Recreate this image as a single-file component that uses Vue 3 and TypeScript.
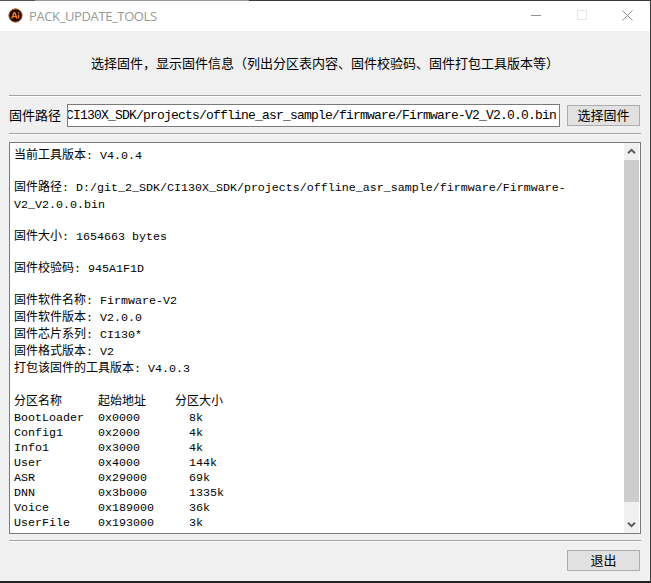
<script setup lang="ts">
interface Line {
  label?: string
  value?: string
}
interface Partition {
  name: string
  address: string
  size: string
}

const path = 'CI130X_SDK/projects/offline_asr_sample/firmware/Firmware-V2_V2.0.0.bin'

const lines: Line[] = [
  { label: '当前工具版本', value: ': V4.0.4' },
  {},
  { label: '固件路径', value: ': D:/git_2_SDK/CI130X_SDK/projects/offline_asr_sample/firmware/Firmware-' },
  { value: 'V2_V2.0.0.bin' },
  {},
  { label: '固件大小', value: ': 1654663 bytes' },
  {},
  { label: '固件校验码', value: ': 945A1F1D' },
  {},
  { label: '固件软件名称', value: ': Firmware-V2' },
  { label: '固件软件版本', value: ': V2.0.0' },
  { label: '固件芯片系列', value: ': CI130*' },
  { label: '固件格式版本', value: ': V2' },
  { label: '打包该固件的工具版本', value: ': V4.0.3' },
  {},
]

const partitions: Partition[] = [
  { name: 'BootLoader', address: '0x0000', size: '8k' },
  { name: 'Config1', address: '0x2000', size: '4k' },
  { name: 'Info1', address: '0x3000', size: '4k' },
  { name: 'User', address: '0x4000', size: '144k' },
  { name: 'ASR', address: '0x29000', size: '69k' },
  { name: 'DNN', address: '0x3b000', size: '1335k' },
  { name: 'Voice', address: '0x189000', size: '36k' },
  { name: 'UserFile', address: '0x193000', size: '3k' },
]
</script>

<template>
  <div class="window">
    <div class="top-edge"></div>
    <header class="titlebar">
      <svg class="logo" width="15" height="15" viewBox="0 0 15 15">
        <circle cx="7.5" cy="7.5" r="6.7" fill="#1c0d06" stroke="#d9662a" stroke-width="1" />
        <path d="M3.8 10.4 6 4.8h.8l2.2 5.6M4.7 8.6h3.5" fill="none" stroke="#f47b20" stroke-width="1.4" />
        <path d="M10.6 6.4v4M10.6 4.2v1.3" stroke="#f47b20" stroke-width="1.4" />
      </svg>
      <span class="title">PACK_UPDATE_TOOLS</span>
      <div class="controls">
        <svg width="11" height="11" viewBox="0 0 11 11"><path d="M0 5.5h10" stroke="#8f8f8f" /></svg>
        <svg width="11" height="11" viewBox="0 0 11 11"><path d="M.5.5h9v9h-9z" fill="none" stroke="#e6e6e6" /></svg>
        <svg width="11" height="11" viewBox="0 0 11 11"><path d="m.5.5 10 10m0-10-10 10" stroke="#8f8f8f" /></svg>
      </div>
    </header>

    <p class="intro">选择固件，显示固件信息（列出分区表内容、固件校验码、固件打包工具版本等）</p>
    <div class="rule"></div>

    <div class="path-row">
      <label class="path-label">固件路径</label>
      <div class="path-box"><span>{{ path }}</span></div>
      <button class="btn">选择固件</button>
    </div>
    <div class="rule"></div>

    <section class="output">
      <div class="log">
        <div v-for="(line, i) in lines" :key="i" class="line" :class="{ blank: !line.value, wrapped: line.value && !line.label }">
          <span v-if="line.label" class="cjk">{{ line.label }}</span><span v-if="line.value">{{ line.value }}</span>
        </div>
        <div class="row head cjk"><span>分区名称</span><span>起始地址</span><span>分区大小</span></div>
        <div class="rows">
          <div v-for="p in partitions" :key="p.name" class="row">
            <span>{{ p.name }}</span><span>{{ p.address }}</span><span class="size">{{ p.size }}</span>
          </div>
        </div>
      </div>
      <div class="scrollbar">
        <div class="arrow">
          <svg width="9" height="7" viewBox="0 0 9 7"><path d="m1 5.3 3.5-3.5L8 5.3" fill="none" stroke="#5c5c5c" stroke-width="2" /></svg>
        </div>
        <div class="thumb"></div>
        <div class="arrow down">
          <svg width="9" height="7" viewBox="0 0 9 7"><path d="m1 1.7 3.5 3.5L8 1.7" fill="none" stroke="#5c5c5c" stroke-width="2" /></svg>
        </div>
      </div>
    </section>
    <div class="rule"></div>

    <footer class="footer"><button class="btn">退出</button></footer>
  </div>
</template>

<style>
body {
  margin: 0;
  overflow: hidden;
}
</style>

<style scoped>
.window {
  box-sizing: border-box;
  width: 651px;
  height: 583px;
  display: flex;
  flex-direction: column;
  background: #f0f0f0;
  border-right: 1px solid #3c3c3c;
  border-bottom: 2px solid #222;
  color: #000;
  font-family: "Noto Sans CJK SC", sans-serif;
  font-size: 13px;
}
.top-edge {
  flex: none;
  height: 1px;
  background: linear-gradient(90deg, #555 0 35px, #999 35px 249px, #3c3c3c 249px);
}
.titlebar {
  height: 30px;
  flex: none;
  display: flex;
  align-items: center;
  padding: 0 17px 0 8px;
  background: #fff;
}
.logo {
  margin-top: -2px;
}
.title {
  margin-left: 6px;
  font: 13px/16px "Open Sans", sans-serif;
  letter-spacing: -0.38px;
  color: #999;
}
.controls {
  margin-left: auto;
  display: flex;
  gap: 34.5px;
  margin-top: -1px;
}
.intro {
  box-sizing: border-box;
  height: 64px;
  flex: none;
  margin: 0;
  line-height: 64px;
  text-align: center;
  white-space: nowrap;
}
.rule {
  flex: none;
  height: 1px;
  margin: 0 9px;
  background: #a0a0a0;
  border-bottom: 1px solid #fff;
}
.path-row {
  height: 36px;
  flex: none;
  display: flex;
  align-items: center;
  padding: 0 10px 0 9px;
}
.path-label {
  width: 58px;
  padding-bottom: 2px;
}
.path-box {
  box-sizing: border-box;
  width: 493px;
  height: 23px;
  display: flex;
  justify-content: flex-end;
  overflow: hidden;
  padding-right: 3px;
  margin-right: 7px;
  background: #fff;
  border: 1px solid #7a7a7a;
  font: 13px/22px "Liberation Mono", monospace;
  letter-spacing: -0.801px;
  white-space: nowrap;
}
.btn {
  box-sizing: border-box;
  width: 73px;
  height: 21px;
  padding: 0 0 2px;
  background: #e1e1e1;
  border: 1px solid #adadad;
  border-radius: 0;
  color: #000;
  font: 13px/17px "Noto Sans CJK SC", sans-serif;
}
.output {
  box-sizing: border-box;
  flex: none;
  width: 632px;
  height: 392px;
  margin: 7px 0 6px 9px;
  display: flex;
  background: #fff;
  border: 1px solid #7a7a7a;
}
.log {
  flex: 1;
  padding: 3px 0 0 4px;
  font: 11.667px/17px "Liberation Mono", monospace;
  white-space: pre;
  overflow: hidden;
}
.line {
  height: 17px;
}
.line.blank {
  height: 15px;
}
.line.wrapped {
  box-sizing: border-box;
  padding-top: 2px;
}
.cjk {
  font-family: "Noto Sans CJK SC", sans-serif;
  font-size: 12px;
  line-height: 15px;
}
.row {
  display: grid;
  grid-template-columns: 84px 77px 1fr;
  height: 15px;
  line-height: 15px;
}
.row.head {
  height: 17px;
  line-height: 17px;
}
.rows {
  padding-top: 3px;
}
.size {
  padding-left: 14px;
}
.scrollbar {
  width: 15px;
  margin-right: 1px;
  display: flex;
  flex-direction: column;
  background: #f0f0f0;
}
.arrow {
  height: 17px;
  display: flex;
  align-items: center;
  justify-content: center;
}
.arrow.down {
  height: 31px;
  align-items: flex-end;
}
.down svg {
  margin-bottom: 5px;
}
.thumb {
  flex: 1;
  background: #cdcdcd;
}
.footer {
  display: flex;
  justify-content: flex-end;
  padding: 8px 10px 0 0;
}
</style>
